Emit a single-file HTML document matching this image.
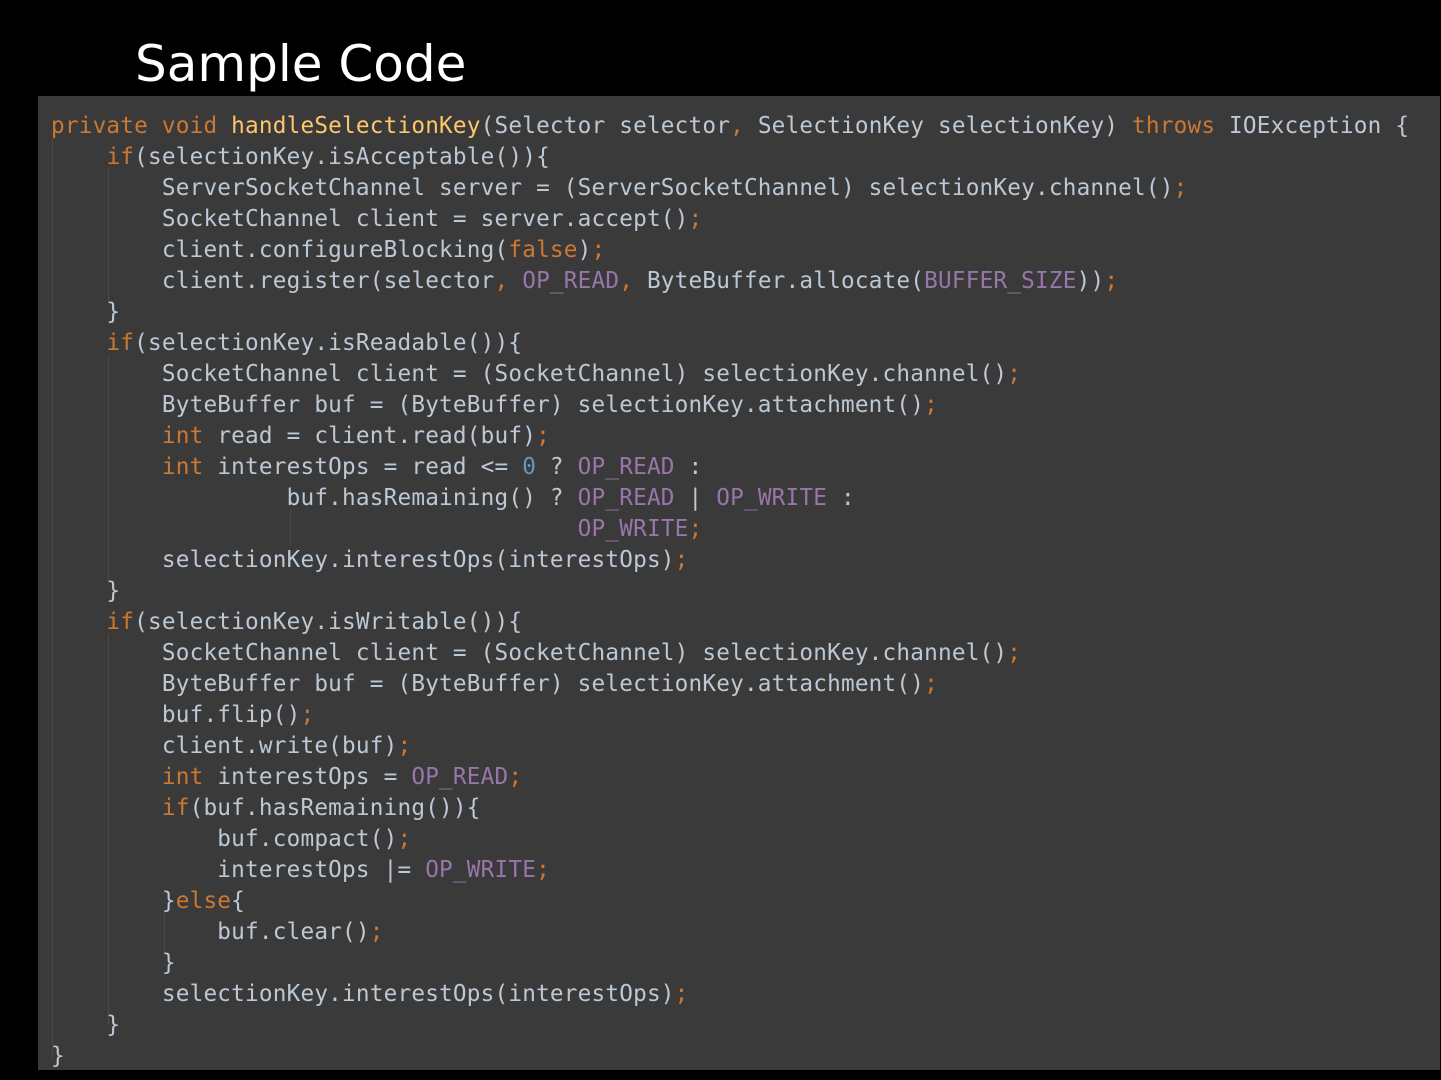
<!DOCTYPE html>
<html><head><meta charset="utf-8"><style>
html,body{margin:0;padding:0;background:#000;width:1441px;height:1080px;overflow:hidden}
.t{position:absolute;left:135px;top:33px;font-family:"DejaVu Sans","Liberation Sans",sans-serif;font-size:50px;color:#fff;line-height:62px}
.box{position:absolute;left:38px;top:96px;width:1402px;height:974px;background:#3a3a3a}
pre{position:absolute;left:13px;top:15px;margin:0;font-family:"DejaVu Sans Mono","Liberation Mono",monospace;font-size:22.7px;line-height:31px;color:#bcc8d4;letter-spacing:0.2px}
.k{color:#cc7832}.m{color:#ffc66d}.c{color:#9876aa}.n{color:#6897bb}
.g{position:absolute;width:1px;background:#4a4a4a}
</style></head><body>
<div class="t">Sample Code</div>
<div class="box">
<div class="g" style="left:14px;top:42px;height:920px"></div>
<div class="g" style="left:70px;top:73px;height:135px"></div>
<div class="g" style="left:70px;top:259px;height:228px"></div>
<div class="g" style="left:70px;top:538px;height:390px"></div>
<div class="g" style="left:126px;top:817px;height:40px"></div>
<div class="g" style="left:252px;top:414px;height:35px"></div>
<pre><span class="k">private void </span><span class="m">handleSelectionKey</span>(Selector selector<span class="k">, </span>SelectionKey selectionKey) <span class="k">throws </span>IOException {
    <span class="k">if</span>(selectionKey.isAcceptable()){
        ServerSocketChannel server = (ServerSocketChannel) selectionKey.channel()<span class="k">;</span>
        SocketChannel client = server.accept()<span class="k">;</span>
        client.configureBlocking(<span class="k">false</span>)<span class="k">;</span>
        client.register(selector<span class="k">, </span><span class="c">OP_READ</span><span class="k">, </span>ByteBuffer.allocate(<span class="c">BUFFER_SIZE</span>))<span class="k">;</span>
    }
    <span class="k">if</span>(selectionKey.isReadable()){
        SocketChannel client = (SocketChannel) selectionKey.channel()<span class="k">;</span>
        ByteBuffer buf = (ByteBuffer) selectionKey.attachment()<span class="k">;</span>
        <span class="k">int </span>read = client.read(buf)<span class="k">;</span>
        <span class="k">int </span>interestOps = read &lt;= <span class="n">0</span> ? <span class="c">OP_READ</span> :
                 buf.hasRemaining() ? <span class="c">OP_READ</span> | <span class="c">OP_WRITE</span> :
                                      <span class="c">OP_WRITE</span><span class="k">;</span>
        selectionKey.interestOps(interestOps)<span class="k">;</span>
    }
    <span class="k">if</span>(selectionKey.isWritable()){
        SocketChannel client = (SocketChannel) selectionKey.channel()<span class="k">;</span>
        ByteBuffer buf = (ByteBuffer) selectionKey.attachment()<span class="k">;</span>
        buf.flip()<span class="k">;</span>
        client.write(buf)<span class="k">;</span>
        <span class="k">int </span>interestOps = <span class="c">OP_READ</span><span class="k">;</span>
        <span class="k">if</span>(buf.hasRemaining()){
            buf.compact()<span class="k">;</span>
            interestOps |= <span class="c">OP_WRITE</span><span class="k">;</span>
        }<span class="k">else</span>{
            buf.clear()<span class="k">;</span>
        }
        selectionKey.interestOps(interestOps)<span class="k">;</span>
    }
}</pre></div>
</body></html>
